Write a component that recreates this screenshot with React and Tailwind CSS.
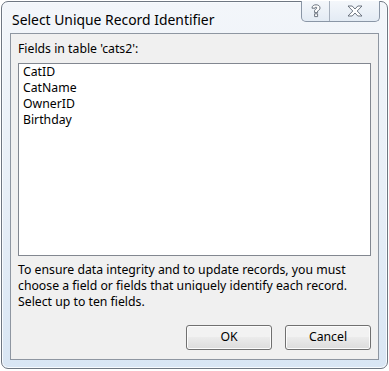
import React from "react";

const fields = ["CatID", "CatName", "OwnerID", "Birthday"];

const HelpGlyph = () => (
  <svg width="12" height="14" viewBox="0 0 12 14">
    <path
      d="M2 4.2 C2 1.8 3.8 0.8 6 0.8 C8.4 0.8 10 2 10 4 C10 5.8 8.6 6.4 7.6 7 L7.6 8.6 L4.6 8.6 L4.6 6.4 C4.6 5.4 6.8 5 6.8 4 C6.8 3.4 6.4 3.1 6 3.1 C5.4 3.1 5 3.5 5 4.2 Z M4.6 9.8 L7.6 9.8 L7.6 12.6 L4.6 12.6 Z"
      fill="#ffffff"
      stroke="#5f6874"
      strokeWidth="0.9"
      strokeLinejoin="round"
    />
  </svg>
);

const CloseGlyph = () => (
  <svg width="16" height="12" viewBox="0 0 16 12">
    <path
      d="M1 1 L5.2 1 L8 4 L10.8 1 L15 1 L10.2 6 L15 11 L10.8 11 L8 8 L5.2 11 L1 11 L5.8 6 Z"
      fill="#ffffff"
      stroke="#5f6874"
      strokeWidth="0.9"
      strokeLinejoin="round"
    />
  </svg>
);

const DialogButton = ({ children }) => (
  <button className="w-[86px] h-[25px] rounded-[3px] border border-[#707070] bg-gradient-to-b from-[#f2f2f2] from-50% via-[#ebebeb] via-50% to-[#dcdcdc] shadow-[inset_0_0_0_1px_#fcfcfc] text-[12.25px] text-black leading-none">
    {children}
  </button>
);

export default function App() {
  return (
    <div className="bg-white w-[389px] h-[371px] pt-px pl-px" style={{ fontFamily: '"Noto Sans", "Liberation Sans", sans-serif' }}>
      <div className="w-[387px] h-[368px] rounded-[7px] border border-[#6f7782] bg-gradient-to-b from-[#f3f6fa] via-[#e8eff7] to-[#d9e6f4] shadow-[inset_0_0_0_1px_#f8fbfe] flex flex-col px-2 pb-2">
        <div className="h-[31px] flex items-start justify-between">
          <div className="pt-[9px] pl-[2px] text-[13.9px] leading-[18px] text-black">
            Select Unique Record Identifier
          </div>
          <div className="flex h-[21px] -mt-px mr-[-1px] rounded-b-[5px] border border-t-0 border-[#8a96a6] bg-gradient-to-b from-[#f4f7fb] to-[#e3ebf4] overflow-hidden">
            <div className="w-[28px] flex items-center justify-center border-r border-[#a5afbc]">
              <HelpGlyph />
            </div>
            <div className="w-[49px] flex items-center justify-center">
              <CloseGlyph />
            </div>
          </div>
        </div>
        <div className="flex-1 border border-[#8e96a1] bg-[#f0f0f0] flex flex-col px-[7px] pt-[7px] pb-[9px] text-[12.25px] leading-[16px] text-black">
          <div>Fields in table 'cats2':</div>
          <div className="mt-[6px] h-[193px] border border-[#828790] bg-white pl-[4px]">
            {fields.map((f) => (
              <div key={f} className="h-[16px]">
                {f}
              </div>
            ))}
          </div>
          <div className="mt-[6px]">
            To ensure data integrity and to update records, you must
            <br />
            choose a field or fields that uniquely identify each record.
            <br />
            Select up to ten fields.
          </div>
          <div className="mt-auto flex justify-end gap-[13px]">
            <DialogButton>OK</DialogButton>
            <DialogButton>Cancel</DialogButton>
          </div>
        </div>
      </div>
    </div>
  );
}
